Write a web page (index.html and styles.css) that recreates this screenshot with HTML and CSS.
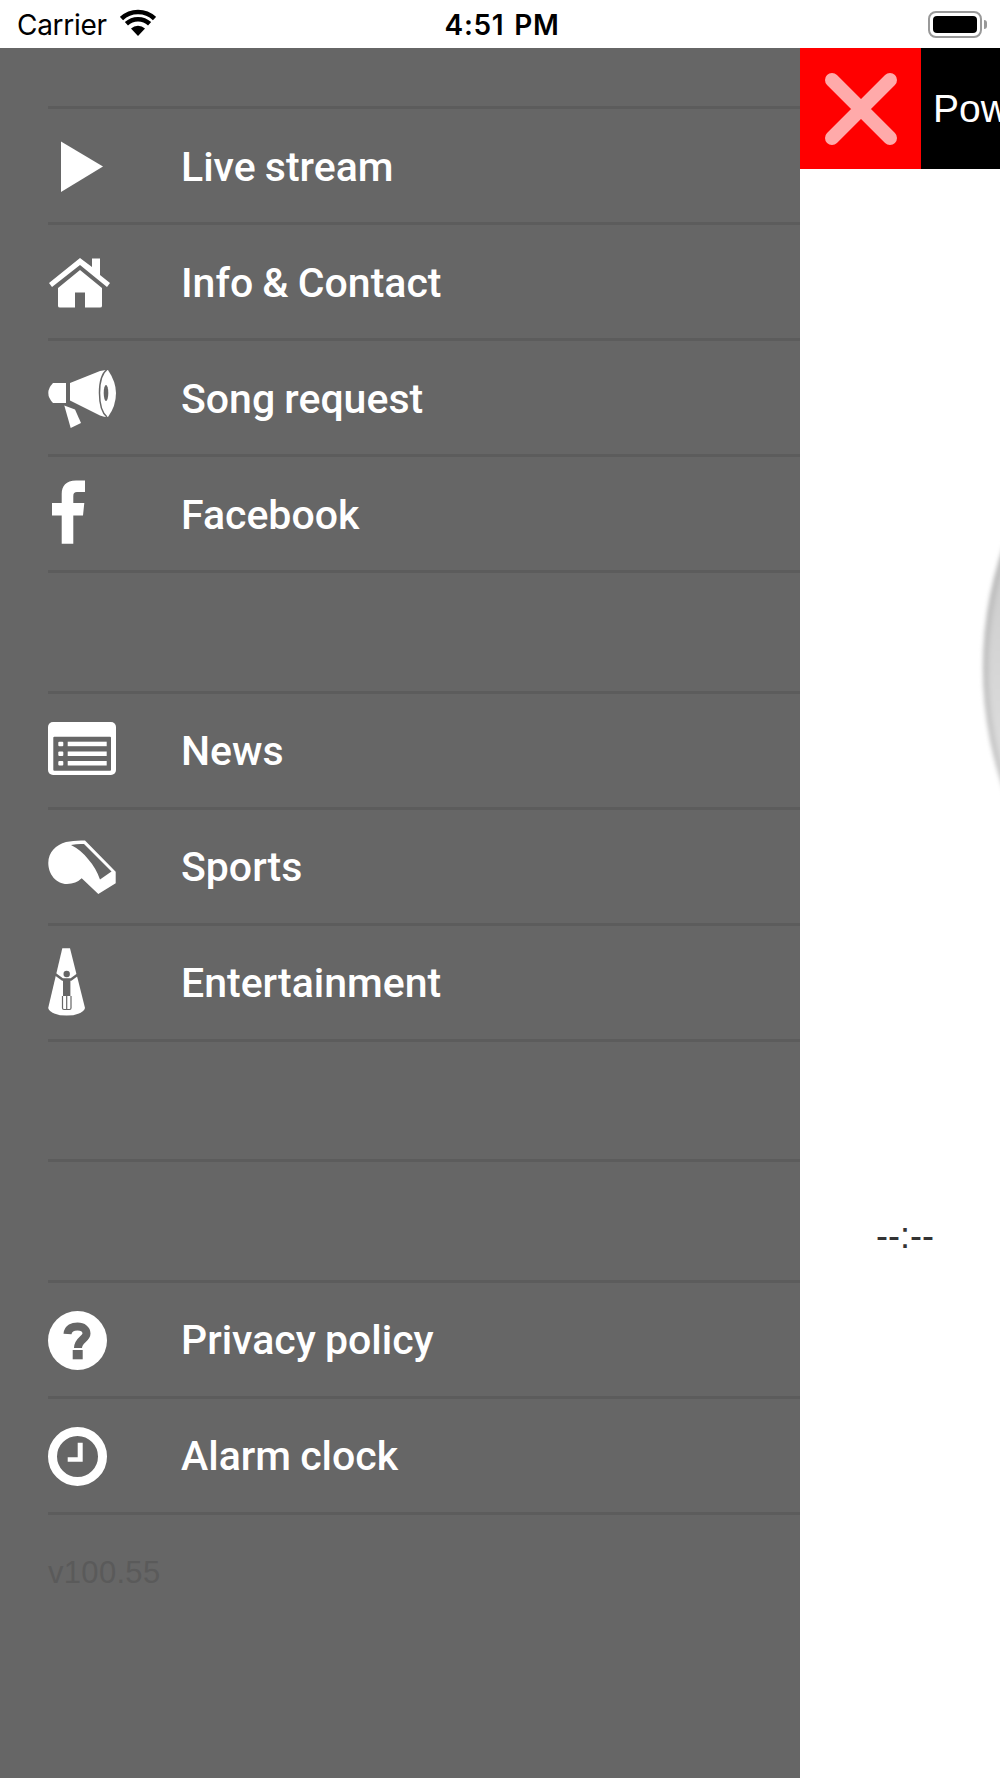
FILE: index.html
```html
<!DOCTYPE html>
<html lang="en">
<head>
    <meta charset="UTF-8">
    <meta name="viewport" content="width=device-width, initial-scale=1.0">
    <title>Radio menu</title>
    <link rel="stylesheet" href="styles.css">
</head>
<body>
    <header class="status-bar">
        <div class="status-left">
            <span class="carrier">Carrier</span>
            <svg class="wifi" viewBox="0 0 36 27" aria-hidden="true">
                <path d="M18 27 L11 19.5 A10.5 10.5 0 0 1 25 19.5 Z" fill="#000"/>
                <path d="M6.4 14.8 A17 17 0 0 1 29.6 14.8" fill="none" stroke="#000" stroke-width="4.6"/>
                <path d="M1.5 9.6 A24 24 0 0 1 34.5 9.6" fill="none" stroke="#000" stroke-width="4.6"/>
            </svg>
        </div>
        <div class="status-time">4:51 PM</div>
        <div class="status-right">
            <div class="battery"><div class="battery-level"></div></div>
            <div class="battery-tip"></div>
        </div>
    </header>

    <div class="app">
        <nav class="drawer">
            <ul class="menu">
                <li class="menu-row">
                    <svg class="menu-icon" viewBox="0 0 72 72"><polygon class="ico" points="13,11.5 55,36.5 13,62"/></svg>
                    <span class="menu-label">Live stream</span>
                </li>
                <li class="menu-row">
                    <svg class="menu-icon" viewBox="0 0 72 72">
                        <polygon class="ico" points="1,37 4,41 32,19 59,41 62,37 52,29 52,12.5 44,12.5 44,21 32,12"/>
                        <path class="ico" d="M10 42 L32 24 L54 42 V60 Q54 61.5 52 61.5 H37 V46.5 H27 V61.5 H12 Q10 61.5 10 60 Z"/>
                    </svg>
                    <span class="menu-label">Info &amp; Contact</span>
                </li>
                <li class="menu-row">
                    <svg class="menu-icon" viewBox="0 0 72 72">
                        <path class="ico" d="M5 21 H18 V41 H5 Q0.3 36 0.3 31 Q0.3 26 5 21 Z"/>
                        <path class="ico" d="M22 21 L52 9 Q57 8 60 8 Q68 20 68 31 Q68 44 60 55 Q56 55 52 53.5 L22 38.5 Z"/>
                        <path class="ico-thin" d="M59 7.5 C53 12 51.5 22 51.5 31 C51.5 41 53 50 59 55"/>
                        <ellipse class="ico-cut" cx="58" cy="31" rx="2.3" ry="8"/>
                        <polygon class="ico" points="16.3,43.5 27,47.5 33,61 22.7,66"/>
                    </svg>
                    <span class="menu-label">Song request</span>
                </li>
                <li class="menu-row">
                    <svg class="menu-icon" viewBox="0 0 72 72">
                        <path class="ico" d="M37 2.5 H28 C18 2.5 13.7 8 13.7 16 V25 H4 V37.5 H13.7 V65.8 H25.3 V37.5 H35 L36.3 25 H25.3 V18 C25.3 15 26.5 14 29 14 H37 Z"/>
                    </svg>
                    <span class="menu-label">Facebook</span>
                </li>
                <li class="menu-gap"></li>
                <li class="menu-row">
                    <svg class="menu-icon" viewBox="0 0 72 72">
                        <rect class="ico" x="0" y="8" width="68" height="53" rx="5"/>
                        <rect class="ico-cut" x="5.3" y="22.7" width="57.7" height="34" rx="1"/>
                        <rect class="ico" x="10.3" y="27.7" width="5" height="4.5" rx="1"/>
                        <rect class="ico" x="10.3" y="37.5" width="5" height="4.5" rx="1"/>
                        <rect class="ico" x="10.3" y="47" width="5" height="4.5" rx="1"/>
                        <rect class="ico" x="19.7" y="27.7" width="39" height="4.5"/>
                        <rect class="ico" x="19.7" y="37.5" width="39" height="4.5"/>
                        <rect class="ico" x="19.7" y="47" width="39" height="4.5"/>
                    </svg>
                    <span class="menu-label">News</span>
                </li>
                <li class="menu-row">
                    <svg class="menu-icon" viewBox="0 0 72 72">
                        <path class="ico" d="M18 12 Q27 10 37 10.5 L67.7 41.7 V53.3 L50.3 64 L33.7 48.3 Q28 54 19 54 C8 54 0.3 44 0.3 33 C0.3 22 8 15 18 12 Z"/>
                        <path class="ico-cut" d="M23 15 Q30 13.5 36 14 L63.5 41.5 L52 49.5 Q48 38 40 29 Q33 20 23 15 Z"/>
                    </svg>
                    <span class="menu-label">Sports</span>
                </li>
                <li class="menu-row">
                    <svg class="menu-icon" viewBox="0 0 72 72">
                        <path class="ico" d="M14.3 2.3 H22 L37 62 A18.5 8.5 0 0 1 0.2 62 Z"/>
                        <circle class="ico-cut" cx="18.7" cy="28" r="3.2"/>
                        <path class="ico-line" d="M7 28 L14.5 33.5 H23 L30.5 28"/>
                        <rect class="ico-cut" x="15" y="33" width="7.4" height="17"/>
                        <path class="ico-legs" d="M14.5 50 V62 Q14.5 63.5 16 63.5 H21.5 Q23 63.5 23 62 V50 M18.7 50 V63"/>
                    </svg>
                    <span class="menu-label">Entertainment</span>
                </li>
                <li class="menu-gap"></li>
                <li class="menu-gap"></li>
                <li class="menu-row">
                    <svg class="menu-icon" viewBox="0 0 72 72">
                        <circle class="ico" cx="29.5" cy="37.5" r="29.5"/>
                        <path class="ico-mark" d="M19.5 31 C20 25 25 23.5 29.5 23.5 C35 23.5 38.5 26.5 38.5 30.5 C38.5 36 30 37 30 45"/>
                        <rect class="ico-cut" x="24.7" y="47" width="10" height="9.3"/>
                    </svg>
                    <span class="menu-label">Privacy policy</span>
                </li>
                <li class="menu-row">
                    <svg class="menu-icon" viewBox="0 0 72 72">
                        <circle class="ico-ring" cx="29.5" cy="37.5" r="25"/>
                        <polygon class="ico" points="29.7,23.7 34.7,23.7 34.7,42.7 19.7,42.7 19.7,38.3 29.7,38.3"/>
                    </svg>
                    <span class="menu-label">Alarm clock</span>
                </li>
            </ul>
            <p class="version">v100.55</p>
        </nav>

        <main class="content">
            <div class="top-bar">
                <button class="close-btn" aria-label="Close">
                    <svg class="close-icon" viewBox="0 0 72 72">
                        <path d="M7 7 L65 65 M65 7 L7 65"/>
                    </svg>
                </button>
                <div class="powered">Pow</div>
            </div>
            <div class="dial"></div>
            <div class="time">--:--</div>
        </main>
    </div>
</body>
</html>
```

FILE: styles.css
```css
* {
    margin: 0;
    padding: 0;
    box-sizing: border-box;
}

html, body {
    width: 1000px;
    height: 1778px;
    overflow: hidden;
    background: white;
}

body {
    font-family: "Liberation Sans", Arial, sans-serif;
}

/* status bar */
.status-bar {
    height: 48px;
    display: grid;
    grid-template-columns: 1fr auto 1fr;
    align-items: center;
    padding: 1px 13px 0 17px;
    background: white;
    color: black;
}

.status-left {
    display: flex;
    align-items: center;
    gap: 13px;
}

.carrier {
    font-family: Inter, "Liberation Sans", sans-serif;
    font-size: 28px;
    letter-spacing: -0.3px;
}

.wifi {
    width: 36px;
    height: 27px;
    margin-top: -4px;
}

.status-time {
    font-family: Inter, "Liberation Sans", sans-serif;
    font-size: 28px;
    font-weight: 600;
    letter-spacing: 0.7px;
    word-spacing: 2px;
}

.status-right {
    display: flex;
    align-items: center;
    justify-content: flex-end;
    gap: 2px;
    margin-top: -1px;
}

.battery {
    width: 54px;
    height: 27px;
    padding: 3px;
    border: 2px solid #999;
    border-radius: 8px;
}

.battery-level {
    width: 100%;
    height: 100%;
    background: black;
    border-radius: 4px;
}

.battery-tip {
    width: 3px;
    height: 9px;
    background: #999;
    border-radius: 0 3px 3px 0;
}

.app {
    display: flex;
    height: 1730px;
}

/* drawer */
.drawer {
    width: 800px;
    height: 100%;
    padding: 58px 0 0 48px;
    background: #666;
    color: white;
}

.menu {
    list-style: none;
    border-bottom: 3px solid #5c5c5c;
}

.menu-row {
    display: flex;
    align-items: center;
    height: 116px;
    border-top: 3px solid #5c5c5c;
    font-family: Roboto, "Liberation Sans", sans-serif;
    font-size: 41px;
    font-weight: 500;
    word-spacing: -1px;
}

.menu-label {
    padding-top: 2px;
}

.menu-gap {
    height: 120.5px;
    border-top: 3px solid #5c5c5c;
}

.menu-icon {
    flex: none;
    width: 72px;
    height: 72px;
    margin-right: 61px;
}

.ico { fill: white; }
.ico-cut { fill: #666; }

.ico-thin {
    fill: none;
    stroke: #666;
    stroke-width: 1.5;
}

.ico-line {
    fill: none;
    stroke: #666;
    stroke-width: 2.5;
}

.ico-legs {
    fill: none;
    stroke: #666;
    stroke-width: 1.2;
}

.ico-mark {
    fill: none;
    stroke: #666;
    stroke-width: 8;
}

.ico-ring {
    fill: none;
    stroke: white;
    stroke-width: 9;
}

.version {
    margin-top: 40px;
    font-size: 31px;
    letter-spacing: 0.3px;
    color: #5a5a5a;
}

/* right side */
.content {
    flex: 1;
    position: relative;
    overflow: hidden;
    background: white;
}

.top-bar {
    display: flex;
    height: 121px;
    background: black;
}

.close-btn {
    flex: none;
    display: flex;
    align-items: center;
    justify-content: center;
    width: 121px;
    border: none;
    background: red;
}

.close-icon {
    width: 72px;
    height: 72px;
}

.close-icon path {
    fill: none;
    stroke: #ffaaaa;
    stroke-width: 14;
    stroke-linecap: round;
}

.powered {
    padding: 39px 0 0 12px;
    font-size: 39px;
    line-height: 44px;
    color: white;
    white-space: nowrap;
}

.dial {
    position: absolute;
    top: 249px;
    left: 183px;
    width: 742px;
    height: 742px;
    border-radius: 50%;
    background: linear-gradient(#b8b8b8, #f4f4f4);
    box-shadow: inset 4px 0 5px rgba(0, 0, 0, 0.15);
    filter: blur(2px);
}

.time {
    margin-top: 1049px;
    padding-left: 10px;
    text-align: center;
    font-size: 36px;
    line-height: 36px;
    color: #333;
}
```
